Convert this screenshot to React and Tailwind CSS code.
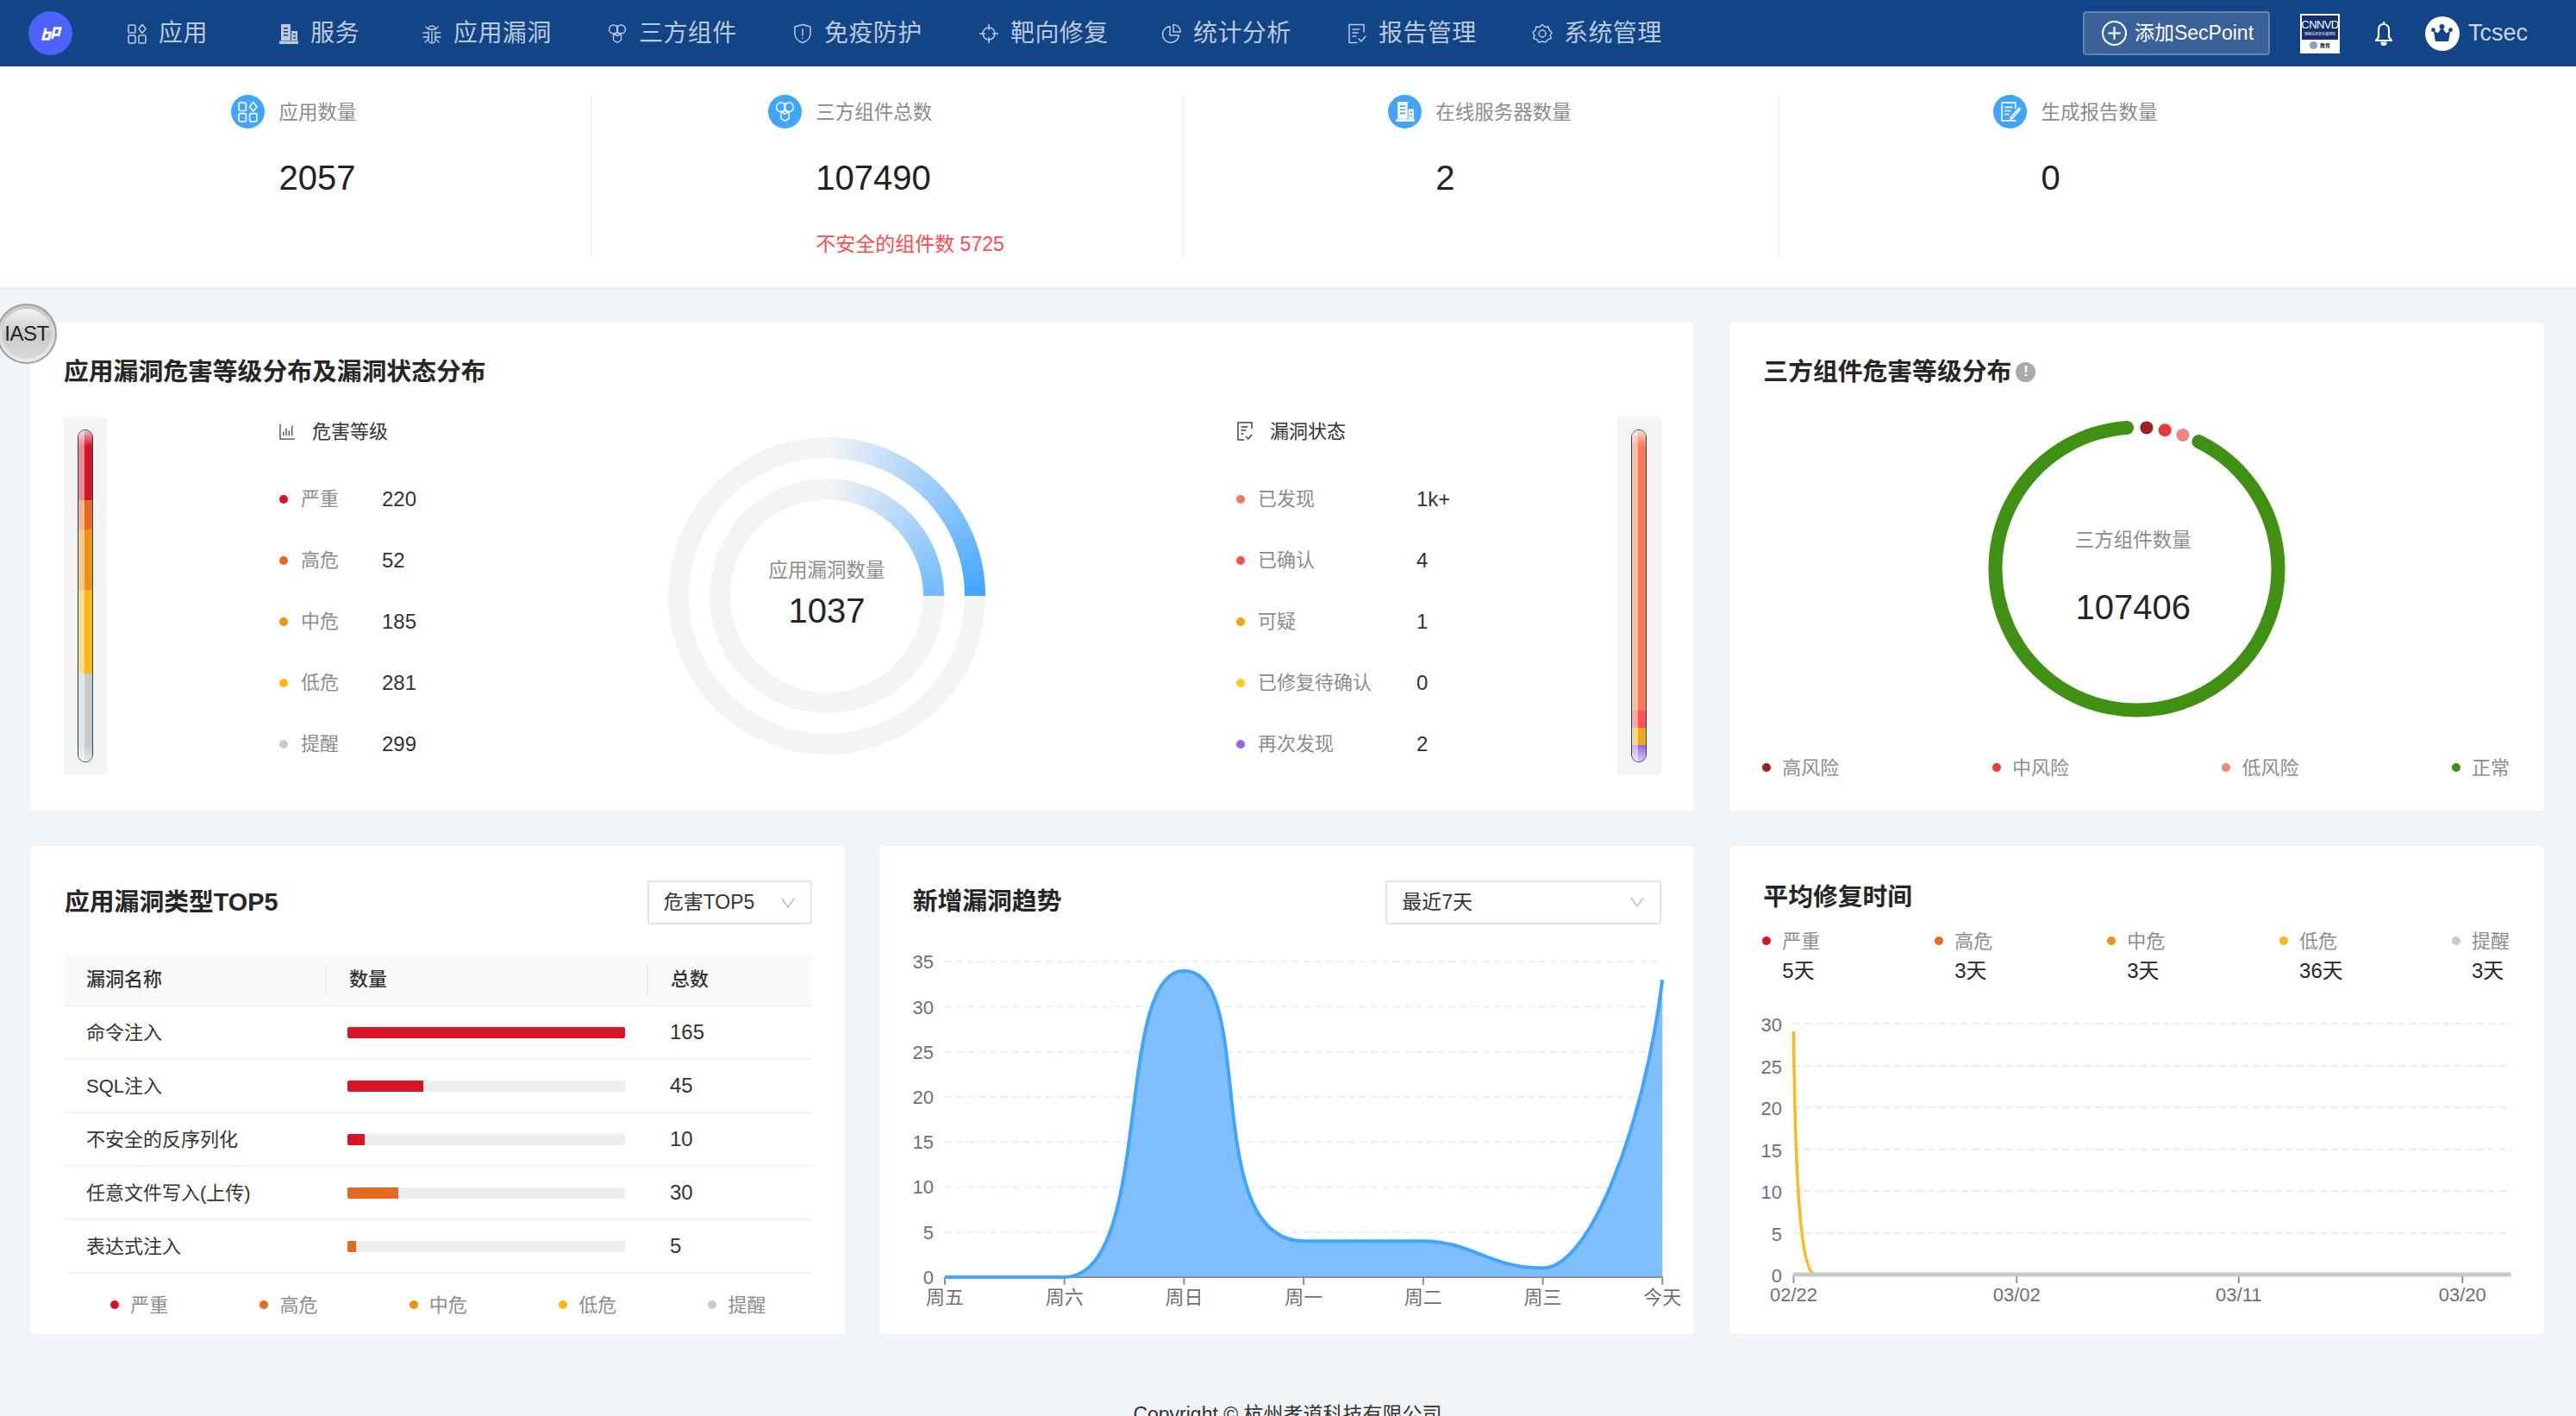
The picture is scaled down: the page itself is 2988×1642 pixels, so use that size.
import React from "react";

const Ic = ({ children, className = "w-[24px] h-[24px]", fill = "none", sw = 1.6 }) => (
  <svg viewBox="0 0 24 24" className={className} fill={fill} stroke="currentColor" strokeWidth={sw} strokeLinecap="round" strokeLinejoin="round">{children}</svg>
);
const AppIcon = (p) => (
  <Ic {...p}><rect x="2" y="2" width="8" height="9" rx="1.5" /><path d="M18 1.5l4 5-4 5-4-5z" /><rect x="2" y="14" width="8" height="9" rx="1.5" /><rect x="14" y="14" width="8" height="9" rx="1.5" /></Ic>
);
const BuildIcon = (p) => (
  <Ic {...p} fill="currentColor" sw={0}><path d="M3 1h11v19H3zM15 9h7v11h-7zM1 20.5h22V24H1z" /><path d="M6 5h5v1.6H6zM6 9h5v1.6H6zM6 13h5v1.6H6zM17 12h3v1.6h-3zM17 16h3v1.6h-3z" fill="#124488" /></Ic>
);
const BuildIconW = (p) => (
  <Ic {...p} fill="currentColor" sw={0}><path d="M4 1h11v19H4zM16 9h6v11h-6zM2 20.5h21V23H2z" /><path d="M6.5 5h6v1.6h-6zM6.5 9h6v1.6h-6zM6.5 13h6v1.6h-6zM17.5 12h3v1.6h-3zM17.5 16h3v1.6h-3z" fill="#40a5ff" /></Ic>
);
const BugIcon = (p) => (
  <Ic {...p} sw={1.4}><path d="M8 7a4 4 0 0 1 8 0z" /><path d="M12 9v14M8 10v9a4 4 0 0 0 4 4 4 4 0 0 0 4-4v-9" /><path d="M5 4l3 3M19 4l-3 3M2 11h6M22 11h-6M2 16h6M22 16h-6M4 22l4-4M20 22l-4-4" /></Ic>
);
const CompIcon = (p) => (
  <Ic {...p} sw={1.4}><circle cx="7.5" cy="7" r="5" /><circle cx="16.5" cy="7" r="5" /><path d="M12 11l4.5 2.5v6L12 22.5l-4.5-3v-6z" /><path d="M12 2.5v2M8 12.5l4 2 4-2" /></Ic>
);
const ShieldIcon = (p) => (
  <Ic {...p} sw={1.5}><path d="M12 1.5l9 2.5v8c0 5-4 9-9 10.500C7 21 3 17 3 12V4z" /><path d="M12 7v7M12 17v.5" /></Ic>
);
const TargetIcon = (p) => (
  <Ic {...p} sw={1.5}><circle cx="12" cy="12" r="7" /><path d="M12 1.500v6M12 16.500v6M1.500 12h6M16.500 12h6" /></Ic>
);
const PieIcon = (p) => (
  <Ic {...p} sw={1.5}><path d="M10 3.500a9.500 9.500 0 1 0 10.500 10.500H10z" /><path d="M14 1.500a8.500 8.500 0 0 1 8.500 8.500H14z" /></Ic>
);
const ReportIcon = (p) => (
  <Ic {...p} sw={1.5}><path d="M20 10V1.500H3v21h9" /><path d="M7 7h8M7 11h6M7 15h4M14 18l3 3 5-6" /></Ic>
);
const EditIcon = (p) => (
  <Ic {...p} sw={1.6}><path d="M18 8V2H3v20h15" /><path d="M6.500 7h8M6.500 11h6M6.500 15h4" /><path d="M13 18l9-10 1.500 1.500-9 10-2 .5z" /></Ic>
);
const GearIcon = (p) => (
  <Ic {...p} sw={1.5}><path d="M12 1.500l3 2.800 4-.3 1 3.900 3 2.600-1.800 3.500 1 3.600-3.700 1.100L16 22l-4-1-4 1-2.500-3.300L1.800 17.600l1-3.600L1 10.500l3-2.600 1-3.900 4 .3z" /><circle cx="12" cy="12" r="4" /></Ic>
);
const ChartBarsIcon = () => (
  <svg viewBox="0 0 20 20" className="w-[19px] h-[19px]" fill="none" stroke="#444" strokeWidth="1.4"><path d="M1 1v18h18M5 15v-5M8.500 15V6M12 15V9M15.500 15V3" /></svg>
);
const ReportSmall = () => (
  <svg viewBox="0 0 20 22" className="w-[20px] h-[22px]" fill="none" stroke="#444" strokeWidth="1.5"><path d="M18 8V1H2v20h7" /><path d="M5.500 6h8M5.500 10h6M5.500 14h3M11 17l3 3 4-5" /></svg>
);
const Chevron = () => (
  <svg viewBox="0 0 16 12" className="w-[16px] h-[12px]" fill="none" stroke="#bdbdbd" strokeWidth="1.500"><path d="M1 1l7 10 7-10" /></svg>
);

const nav = [
  ["应用", AppIcon, "w-[176px]"],
  ["服务", BuildIcon, "w-[166px]"],
  ["应用漏洞", BugIcon, "w-[215px]"],
  ["三方组件", CompIcon, "w-[215px]"],
  ["免疫防护", ShieldIcon, "w-[216px]"],
  ["靶向修复", TargetIcon, "w-[212px]"],
  ["统计分析", PieIcon, "w-[215px]"],
  ["报告管理", ReportIcon, "w-[215px]"],
  ["系统管理", GearIcon, "w-[215px]"],
];

function Header() {
  return (
    <header className="h-[77px] bg-[#124488] flex items-center shrink-0">
      <div className="ml-[33px] w-[51px] h-[51px] rounded-full bg-[#4c62fb] flex items-center justify-center">
        <svg viewBox="0 0 28 16" className="w-[27px] h-[16px]" fill="none" stroke="#fff" strokeWidth="3" strokeLinejoin="miter"><path d="M8.500 1.500L5 14.500h7l2-7.500H7" /><path d="M16 14.500L19 1.500h7l-2 8h-8" /></svg>
      </div>
      <nav className="ml-[64px] flex items-center text-[#bcc9dc] text-[28px] tracking-[0.4px]">
        {nav.map(([t, I, w]) => (
          <div key={t} className={"flex items-center " + w}>
            <span className="w-[36px] shrink-0"><I className="w-[24px] h-[24px] -ml-[1px]" /></span>
            <span className="whitespace-nowrap">{t}</span>
          </div>
        ))}
      </nav>
      <div className="ml-auto flex items-center mr-[2px]">
        <button className="w-[217px] h-[51px] bg-[#3a6199] border-2 border-[#6484b0] rounded-[4px] flex items-center text-white text-[23px] pl-[20px]">
          <svg viewBox="0 0 28 28" className="w-[29px] h-[29px] mr-[9px]" fill="none" stroke="#fff" strokeWidth="2"><circle cx="14" cy="14" r="13" /><path d="M14 7v14M7 14h14" /></svg>
          添加SecPoint
        </button>
        <div className="ml-[35px] w-[46px] h-[46px] bg-white p-[2px] flex flex-col">
          <div className="bg-[#12306f] h-[28px] flex flex-col items-center justify-center text-white leading-none">
            <span className="text-[13px] tracking-[-0.6px]">CNNVD</span>
            <span className="text-[4px] mt-[3px] whitespace-nowrap">国家信息安全漏洞库</span>
          </div>
          <div className="flex-1 flex items-center justify-center gap-[3px]">
            <span className="w-[9px] h-[9px] rounded-full bg-[#8fa2c0]"></span>
            <span className="text-[6px] leading-none text-[#223] font-bold">教育</span>
          </div>
        </div>
        <svg viewBox="0 0 22 28" className="ml-[40px] w-[22px] h-[28px]" fill="none" stroke="#fff" strokeWidth="2.200" strokeLinejoin="round"><path d="M11 3c-4.500 0-6 3.500-6 7v8l-3 4h18l-3-4v-8c0-3.500-1.500-7-6-7z" /><path d="M11 0v3" /><path d="M8.500 24.500a2.500 2.500 0 0 0 5 0z" fill="#fff" /></svg>
        <div className="ml-[37px] w-[40px] h-[40px] rounded-full bg-white flex items-center justify-center">
          <svg viewBox="0 0 26 22" className="w-[25px] h-[21px]" fill="#124488"><circle cx="13" cy="3" r="3" /><circle cx="2.500" cy="7" r="2.500" /><circle cx="23.500" cy="7" r="2.500" /><path d="M3 8l5 3 5-7 5 7 5-3-2 13H5z" /></svg>
        </div>
        <span className="ml-[10px] mr-[54px] text-[27px] text-[#ccd5e2]">Tcsec</span>
      </div>
    </header>
  );
}

function Stat({ icon: I, label, value, red, w }) {
  return (
    <div className={"h-[190px] flex justify-center pr-[3px] border-r-2 border-[#f5f5f5] last:border-r-0 " + w}>
      <div className="w-[39px] h-[39px] rounded-full bg-[#40a5ff] text-white flex items-center justify-center shrink-0">
        <I className="w-[25px] h-[25px]" />
      </div>
      <div className="ml-[16px] flex flex-col">
        <div className="h-[39px] pt-[1px] leading-[39px] text-[22.500px] text-[#8c8c8c] whitespace-nowrap">{label}</div>
        <div className="mt-[34px] h-[46px] leading-[46px] text-[40px] text-[#222]">{value}</div>
        {red && <div className="mt-[37px] text-[23px] leading-[34px] text-[#ff4d4f] whitespace-nowrap">{red}</div>}
      </div>
    </div>
  );
}

function Stats() {
  return (
    <section className="h-[258px] bg-white border-b-2 border-[#e9edf0] pt-[33px] flex shrink-0">
      <Stat icon={AppIcon} label="应用数量" value="2057" w="w-[687px]" />
      <Stat icon={CompIcon} label="三方组件总数" value="107490" red="不安全的组件数 5725" w="w-[687px]" />
      <Stat icon={BuildIconW} label="在线服务器数量" value="2" w="w-[690px]" />
      <Stat icon={EditIcon} label="生成报告数量" value="0" w="w-[690px]" />
    </section>
  );
}

function Tube({ segs }) {
  return (
    <div className="w-[51px] h-[416px] bg-[#f4f4f4] rounded-[4px] pt-[15px] pl-[16px] shrink-0">
      <div className="relative w-[18px] h-[386px] rounded-full border border-[#0f4c6b] overflow-hidden flex flex-col">
        {segs}
        <div className="absolute left-0 top-0 bottom-0 w-[7px] bg-white/50"></div>
        <div className="absolute left-0 right-0 top-0 h-[18px] bg-gradient-to-b from-white/70 to-transparent"></div>
        <div className="absolute left-0 right-0 bottom-0 h-[18px] bg-gradient-to-t from-white/60 to-transparent"></div>
      </div>
    </div>
  );
}

const Dot = ({ c }) => <span className={"w-[10px] h-[10px] rounded-full shrink-0 " + c}></span>;

const levels = [["严重", "220", "bg-[#d71525]"], ["高危", "52", "bg-[#e56a1f]"], ["中危", "185", "bg-[#f39019]"], ["低危", "281", "bg-[#ffb818]"], ["提醒", "299", "bg-[#c9c9c9]"]];
const statuses = [["已发现", "1k+", "bg-[#ff7853]"], ["已确认", "4", "bg-[#ff4d4f]"], ["可疑", "1", "bg-[#f0a418]"], ["已修复待确认", "0", "bg-[#ffcc1a]"], ["再次发现", "2", "bg-[#9b63e0]"]];

function arcSegs(r, endColor) {
  const out = [];
  const N = 60;
  const cx = 184, cy = 184;
  const from = [244, 244, 244];
  for (let i = 0; i < N; i++) {
    const a0 = (i / N) * Math.PI / 2;
    const a1 = ((i + 1.15) / N) * Math.PI / 2;
    const f = (i + 0.5) / N;
    const c = from.map((v, k) => Math.round(v + (endColor[k] - v) * f));
    out.push(
      <path key={i} d={`M${cx + r * Math.sin(a0)} ${cy - r * Math.cos(a0)}A${r} ${r} 0 0 1 ${cx + r * Math.sin(Math.min(a1, Math.PI / 2))} ${cy - r * Math.cos(Math.min(a1, Math.PI / 2))}`} stroke={`rgb(${c.join(",")})`} strokeWidth="24" fill="none" />
    );
  }
  return out;
}

function Card1() {
  return (
    <div className="col-span-2 bg-white rounded-[4px] h-[566px] pl-[39px] pt-[40px]">
      <h2 className="h-[34px] leading-[34px] text-[28.800px] font-semibold text-[#262626]">应用漏洞危害等级分布及漏洞状态分布</h2>
      <div className="mt-[35px] flex">
        <Tube segs={<>
          <div className="h-[81px] bg-[#d71525]"></div>
          <div className="h-[34px] bg-[#e56a1f]"></div>
          <div className="h-[70px] bg-[#f39019]"></div>
          <div className="h-[97px] bg-[#ffb818]"></div>
          <div className="flex-1 bg-[#c9c9c9]"></div>
        </>} />
        <div className="ml-[199px] w-[451px] shrink-0">
          <div className="h-[34px] flex items-center text-[22px] text-[#333]">
            <ChartBarsIcon /><span className="ml-[19px]">危害等级</span>
          </div>
          <div className="mt-[26px]">
            {levels.map(([l, v, c]) => (
              <div key={l} className="h-[71px] flex items-center">
                <Dot c={c} />
                <span className="ml-[15px] w-[94px] text-[22px] text-[#8c8c8c]">{l}</span>
                <span className="text-[24px] text-[#333]">{v}</span>
              </div>
            ))}
          </div>
        </div>
        <div className="relative w-[368px] h-[368px] mt-[24px] shrink-0">
          <svg viewBox="0 0 368 368" className="w-[368px] h-[368px]">
            <circle cx="184" cy="184" r="172" fill="none" stroke="#f4f4f4" strokeWidth="24" />
            <circle cx="184" cy="184" r="124" fill="none" stroke="#f4f4f4" strokeWidth="24" />
            {arcSegs(172, [64, 165, 255])}
            {arcSegs(124, [110, 184, 255])}
          </svg>
          <div className="absolute left-0 right-0 top-[139px] text-center text-[22.500px] leading-[32px] text-[#8c8c8c]">应用漏洞数量</div>
          <div className="absolute left-0 right-0 top-[178px] text-center text-[40px] leading-[46px] text-[#262626]">1037</div>
        </div>
        <div className="ml-[291px] w-[442px] shrink-0">
          <div className="h-[34px] flex items-center text-[22px] text-[#333]">
            <ReportSmall /><span className="ml-[19px]">漏洞状态</span>
          </div>
          <div className="mt-[26px]">
            {statuses.map(([l, v, c]) => (
              <div key={l} className="h-[71px] flex items-center">
                <Dot c={c} />
                <span className="ml-[15px] w-[184px] text-[22px] text-[#8c8c8c]">{l}</span>
                <span className="text-[24px] text-[#333]">{v}</span>
              </div>
            ))}
          </div>
        </div>
        <Tube segs={<>
          <div className="h-[325px] bg-[#ff7853]"></div>
          <div className="h-[20px] bg-[#ff5252]"></div>
          <div className="h-[20px] bg-[#f0a91a]"></div>
          <div className="flex-1 bg-[#9b6be0]"></div>
        </>} />
      </div>
    </div>
  );
}

const polar = (cx, cy, r, deg) => [cx + r * Math.sin((deg * Math.PI) / 180), cy - r * Math.cos((deg * Math.PI) / 180)];

function Card2() {
  const r = 164;
  const c = 172.5;
  const [sx, sy] = polar(c, c, r, 26);
  const [ex, ey] = polar(c, c, r, -4);
  const dots = [[4, "#9b2121"], [11.5, "#e63b3b"], [19, "#f0847f"]];
  return (
    <div className="bg-white rounded-[4px] h-[566px] pt-[40px]">
      <h2 className="pl-[39px] h-[34px] leading-[34px] text-[28.800px] font-semibold text-[#262626] flex items-center">
        三方组件危害等级分布
        <span className="ml-[5px] w-[23px] h-[23px] rounded-full bg-[#a9a9a9] text-white text-[16px] font-bold flex items-center justify-center">!</span>
      </h2>
      <div className="relative mx-auto mt-[39px] w-[345px] h-[345px]">
        <svg viewBox="0 0 345 345" className="w-[345px] h-[345px]">
          <path d={`M${sx} ${sy}A${r} ${r} 0 1 1 ${ex} ${ey}`} fill="none" stroke="#3f9013" strokeWidth="16" strokeLinecap="round" />
          {dots.map(([a, col]) => {
            const [x, y] = polar(c, c, r, a);
            return <circle key={a} cx={x} cy={y} r="7.500" fill={col} />;
          })}
        </svg>
        <div className="absolute left-0 right-[9px] top-[124px] text-center text-[22.500px] leading-[32px] text-[#8c8c8c]">三方组件数量</div>
        <div className="absolute left-0 right-[9px] top-[194px] text-center text-[40px] leading-[46px] text-[#262626]">107406</div>
      </div>
      <div className="mt-[41px] pl-[38px] pr-[40px] h-[34px] flex items-center justify-between text-[22px] text-[#8c8c8c]">
        {[["高风险", "bg-[#9b2121]"], ["中风险", "bg-[#e63b3b]"], ["低风险", "bg-[#f0847f]"], ["正常", "bg-[#3f9013]"]].map(([l, col]) => (
          <div key={l} className="flex items-center"><Dot c={col} /><span className="ml-[13px]">{l}</span></div>
        ))}
      </div>
    </div>
  );
}

const Select = ({ label, w }) => (
  <div className={"h-[51px] border-2 border-[#e3e3e3] rounded-[3px] flex items-center justify-between pl-[17px] pr-[18px] text-[23px] text-[#333] " + w}>
    <span>{label}</span><Chevron />
  </div>
);

const rows = [
  ["命令注入", 100, "bg-[#d71525]", "165"],
  ["SQL注入", 27.300, "bg-[#d71525]", "45"],
  ["不安全的反序列化", 6.200, "bg-[#d71525]", "10"],
  ["任意文件写入(上传)", 18.200, "bg-[#e56a1f]", "30"],
  ["表达式注入", 3.100, "bg-[#e56a1f]", "5"],
];

function Card3() {
  return (
    <div className="bg-white rounded-[4px] h-[566px] pl-[40px] pr-[38px] pt-[40px]">
      <div className="flex items-center justify-between">
        <h2 className="text-[28.800px] font-semibold text-[#262626]">应用漏洞类型TOP5</h2>
        <Select label="危害TOP5" w="w-[191px]" />
      </div>
      <div className="mt-[34px] h-[61px] bg-[#fafafa] border-b-2 border-[#efefef] grid grid-cols-[302px_373px_192px] items-center text-[22px] font-medium text-[#333]">
        <div className="pl-[25px]">漏洞名称</div>
        <div className="pl-[26px] h-[36px] leading-[36px] border-l-2 border-[#ececec]">数量</div>
        <div className="pl-[26px] h-[36px] leading-[36px] border-l-2 border-[#ececec]">总数</div>
      </div>
      {rows.map(([n, p, c, v]) => (
        <div key={n} className="h-[62px] border-b-2 border-[#f2f2f2] grid grid-cols-[302px_373px_192px] items-center text-[22px] text-[#333]">
          <div className="pl-[25px] whitespace-nowrap">{n}</div>
          <div className="pl-[26px]">
            <div className="w-[322px] h-[13px] bg-[#eeeeee] rounded-[2px] overflow-hidden">
              <div className={"h-full " + c} style={{ width: p + "%" }}></div>
            </div>
          </div>
          <div className="pl-[27px] text-[24px]">{v}</div>
        </div>
      ))}
      <div className="mt-[2px] h-[68px] flex items-center text-[22px] text-[#8c8c8c]">
        {levels.map(([l, , c]) => (
          <div key={l} className="flex-1 flex items-center justify-center">
            <Dot c={c} /><span className="ml-[13px]">{l}</span>
          </div>
        ))}
      </div>
    </div>
  );
}

function TrendChart() {
  const X = (i) => 1096 + i * 138.77;
  const Y = (v) => 1481 - v * 10.45;
  const d = 138.77;
  const curve =
    `M${X(0)} ${Y(0)}L${X(1)} ${Y(0)}` +
    `C${X(1) + 0.75 * d} ${Y(0)} ${X(1) + 0.41 * d} ${Y(34)} ${X(2)} ${Y(34)}` +
    `C${X(2) + 0.62 * d} ${Y(34)} ${X(2) + 0.12 * d} ${Y(4)} ${X(3)} ${Y(4)}` +
    `L${X(4)} ${Y(4)}` +
    `C${X(4) + 0.4 * d} ${Y(4)} ${X(4) + 0.55 * d} ${Y(1)} ${X(5)} ${Y(1)}` +
    `C${X(5) + 0.4 * d} ${Y(1)} ${X(5) + 0.85 * d} ${Y(17)} ${X(6)} ${Y(33)}`;
  const labels = ["周五", "周六", "周日", "周一", "周二", "周三", "今天"];
  return (
    <svg viewBox="1021 1072 945 474" className="block w-full h-[474px]">
      {[35, 30, 25, 20, 15, 10, 5].map((v) => (
        <line key={v} x1="1096" x2="1929" y1={Y(v)} y2={Y(v)} stroke="#e8edf6" strokeWidth="2" strokeDasharray="8 5" />
      ))}
      <path d={curve + `L${X(6)} ${Y(0)}Z`} fill="#80bfff" />
      <line x1="1096" x2="1929" y1={Y(0)} y2={Y(0)} stroke="#8a909c" strokeWidth="2" />
      {labels.map((l, i) => (
        <g key={l}>
          <line x1={X(i)} x2={X(i)} y1={Y(0)} y2={Y(0) + 9} stroke="#8a909c" strokeWidth="2" />
          <text x={X(i)} y="1512" textAnchor="middle" fontSize="22" fill="#6e7079">{l}</text>
        </g>
      ))}
      <path d={curve} fill="none" stroke="#40a5ff" strokeWidth="4" />
      {[35, 30, 25, 20, 15, 10, 5, 0].map((v) => (
        <text key={v} x="1083" y={Y(v) + 8} textAnchor="end" fontSize="22" fill="#6e7079">{v}</text>
      ))}
    </svg>
  );
}

function Card4() {
  return (
    <div className="bg-white rounded-[4px] h-[566px] pt-[39px]">
      <div className="pl-[38px] pr-[38px] flex items-center justify-between h-[52px]">
        <h2 className="text-[28.800px] font-semibold text-[#262626]">新增漏洞趋势</h2>
        <Select label="最近7天" w="w-[320px]" />
      </div>
      <TrendChart />
    </div>
  );
}

function FixChart() {
  const Y = (v) => 1477.4 - v * 9.71;
  const ticks = [[2080.5, "02/22"], [2339.4, "03/02"], [2597, "03/11"], [2856.6, "03/20"]];
  return (
    <svg viewBox="2006 1142 945 404" className="block w-full h-[404px]">
      {[30, 25, 20, 15, 10, 5].map((v) => (
        <line key={v} x1="2080" x2="2913" y1={Y(v)} y2={Y(v)} stroke="#e8e9f3" strokeWidth="2" strokeDasharray="8 5" />
      ))}
      {ticks.map(([x, l]) => (
        <g key={l}>
          <line x1={x} x2={x} y1="1477" y2="1487" stroke="#8a909c" strokeWidth="2" />
          <text x={x} y="1508" textAnchor="middle" fontSize="22" fill="#6e7079">{l}</text>
        </g>
      ))}
      <path d="M2080.500 1195C2082 1330 2086 1477 2106 1477" fill="none" stroke="#ffb818" strokeWidth="3.500" />
      <line x1="2080" x2="2913" y1="1477" y2="1477" stroke="#c9c9c9" strokeWidth="5" />
      {[30, 25, 20, 15, 10, 5, 0].map((v) => (
        <text key={v} x="2067" y={Y(v) + 9} textAnchor="end" fontSize="22" fill="#6e7079">{v}</text>
      ))}
    </svg>
  );
}

function Card5() {
  const vals = ["5天", "3天", "3天", "36天", "3天"];
  return (
    <div className="bg-white rounded-[4px] h-[566px] pt-[42px]">
      <h2 className="pl-[39px] h-[34px] leading-[34px] text-[28.800px] font-semibold text-[#262626]">平均修复时间</h2>
      <div className="mt-[17px] pl-[38px] pr-[40px] flex justify-between">
        {levels.map(([l, , c], i) => (
          <div key={l} className="w-[67px] shrink-0 whitespace-nowrap">
            <div className="h-[34px] flex items-center text-[22px] text-[#8c8c8c]"><Dot c={c} /><span className="ml-[13px] shrink-0">{l}</span></div>
            <div className="mt-[1px] h-[34px] leading-[34px] pl-[23px] text-[24px] text-[#262626]">{vals[i]}</div>
          </div>
        ))}
      </div>
      <FixChart />
    </div>
  );
}

function Iast() {
  return (
    <div className="absolute left-[-4px] top-[352px] w-[70px] h-[70px] rounded-full border-2 border-[#a0a0a0] bg-gradient-to-b from-[#c8c8c8] to-[#ececec] flex items-center justify-center">
      <div className="w-[58px] h-[58px] rounded-full bg-gradient-to-b from-[#f4f4f4] via-[#c9c9c9] to-[#d9d9d9] flex items-center justify-center">
        <span className="text-[24px] text-[#222] tracking-[-0.5px]">IAST</span>
      </div>
    </div>
  );
}

export default function App() {
  return (
    <div className="relative h-[1642px] w-[2988px] overflow-hidden bg-[#f0f4f7] flex flex-col font-['Liberation_Sans','Noto_Sans_CJK_SC',sans-serif]">
      <Header />
      <Stats />
      <main className="pl-[35px] pr-[37px] pt-[39px] grid grid-cols-3 gap-x-[41px] gap-y-[41px]">
        <Card1 />
        <Card2 />
        <Card3 />
        <Card4 />
        <Card5 />
      </main>
      <footer className="mt-[76px] text-center text-[23px] leading-[34px] text-[#333] pr-[1px]">Copyright © 杭州孝道科技有限公司</footer>
      <Iast />
    </div>
  );
}
